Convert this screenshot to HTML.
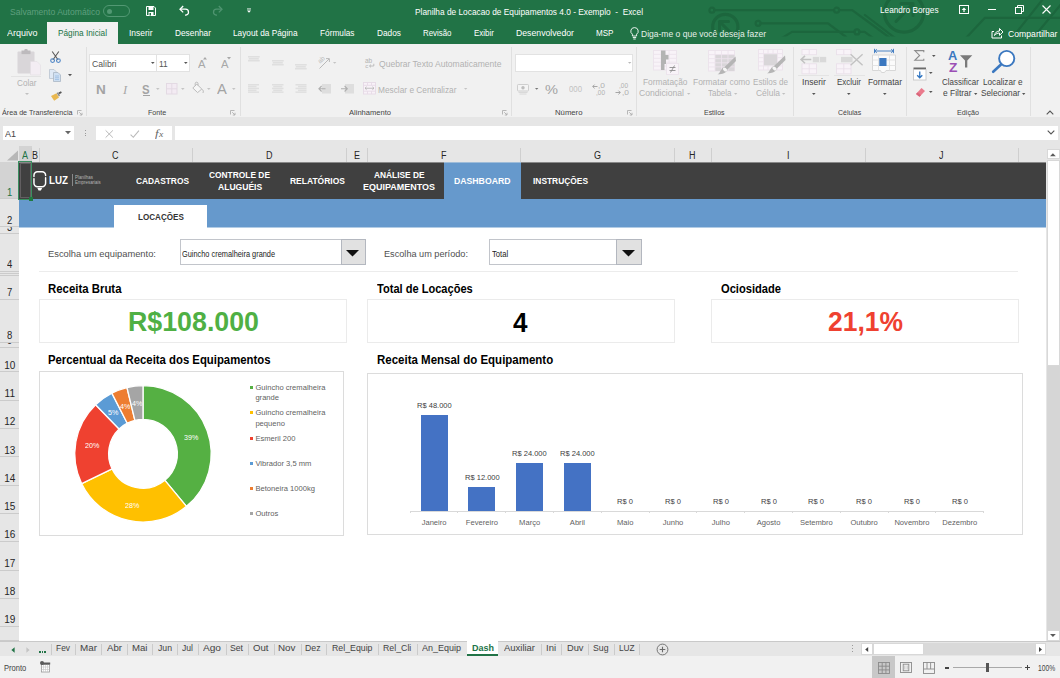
<!DOCTYPE html>
<html lang="pt-BR"><head><meta charset="utf-8"><title>Planilha de Locacao de Equipamentos 4.0 - Exemplo - Excel</title>
<style>
html,body{margin:0;padding:0;background:#fff;}
body{width:1060px;height:678px;overflow:hidden;position:relative;font-family:"Liberation Sans",sans-serif;}
#app{position:absolute;left:0;top:0;width:1060px;height:678px;overflow:hidden;background:#fff;}
.b{position:absolute;display:block;}
.t{position:absolute;display:block;white-space:pre;transform-origin:0 50%;font-family:"Liberation Sans",sans-serif;}
svg{overflow:visible}
</style></head><body><div id="app">
<!-- sheet -->
<div class="b" style="left:0px;top:117px;width:1060px;height:29px;background:#e6e6e6;"></div>
<div class="b" style="left:3px;top:125.5px;width:71px;height:14.5px;background:#fff;"></div>
<span class="t" style="left:5.20px;top:127.60px;font-size:9.5px;line-height:11px;height:11px;color:#444;transform:scaleX(0.9467);">A1</span>
<svg class="b" style="left:64.5px;top:131px;" width="6" height="3.2" viewBox="0 0 6 3.2"><path d="M0 0 H6 L3 3.2 Z" fill="#666"/></svg>
<div class="b" style="left:84.5px;top:130px;width:1px;height:1px;background:#9a9a9a;"></div>
<div class="b" style="left:84.5px;top:132.5px;width:1px;height:1px;background:#9a9a9a;"></div>
<div class="b" style="left:84.5px;top:135px;width:1px;height:1px;background:#9a9a9a;"></div>
<div class="b" style="left:95.5px;top:125.5px;width:76.5px;height:14.5px;background:#fff;"></div>
<svg class="b" style="left:104.5px;top:129.5px;" width="8.5" height="8" viewBox="0 0 8.5 8"><path d="M0.6 0.4 L7.9 7.6 M7.9 0.4 L0.6 7.6" stroke="#b9b9b9" stroke-width="1"/></svg>
<svg class="b" style="left:130px;top:129.5px;" width="9.5" height="8" viewBox="0 0 9.5 8"><path d="M0.6 4.6 L3.3 7.3 L8.9 0.6" fill="none" stroke="#b9b9b9" stroke-width="1.1"/></svg>
<span class="t" style="left:155.20px;top:127.00px;font-size:11px;line-height:12px;height:12px;color:#666;font-style:italic;transform:scaleX(1.1780);font-family:'Liberation Serif',serif;">f</span>
<span class="t" style="left:159.00px;top:129.30px;font-size:8.5px;line-height:10px;height:10px;color:#666;font-style:italic;transform:scaleX(1.1294);font-family:'Liberation Serif',serif;">x</span>
<div class="b" style="left:174.5px;top:125.5px;width:883.5px;height:14.5px;background:#fff;"></div>
<svg class="b" style="left:1046.5px;top:130px;" width="8" height="5" viewBox="0 0 8 5"><path d="M0.7 0.7 L4 4 L7.3 0.7" fill="none" stroke="#555" stroke-width="1.1"/></svg>
<div class="b" style="left:0px;top:146px;width:1060px;height:16px;background:#e6e6e6;"></div>
<svg class="b" style="left:6px;top:149.5px;" width="13" height="11" viewBox="0 0 13 11"><path d="M12 0.5 V10.5 H1 Z" fill="#b7b7b7"/></svg>
<div class="b" style="left:19px;top:146px;width:12.5px;height:16px;background:#d3d3d3;"></div>
<div class="b" style="left:19px;top:160.6px;width:12.5px;height:1.4px;background:#217346;"></div>
<div class="b" style="left:31.0px;top:148px;width:1px;height:14px;background:#cfcfcf;"></div>
<span class="t" style="left:22.25px;top:150.20px;font-size:10px;line-height:11px;height:11px;color:#217346;transform:scaleX(0.9000);">A</span>
<div class="b" style="left:38.5px;top:148px;width:1px;height:14px;background:#cfcfcf;"></div>
<span class="t" style="left:32.25px;top:150.20px;font-size:10px;line-height:11px;height:11px;color:#262626;transform:scaleX(0.9000);">B</span>
<div class="b" style="left:191.5px;top:148px;width:1px;height:14px;background:#cfcfcf;"></div>
<span class="t" style="left:112.25px;top:150.20px;font-size:10px;line-height:11px;height:11px;color:#262626;transform:scaleX(0.9000);">C</span>
<div class="b" style="left:345.5px;top:148px;width:1px;height:14px;background:#cfcfcf;"></div>
<span class="t" style="left:265.75px;top:150.20px;font-size:10px;line-height:11px;height:11px;color:#262626;transform:scaleX(0.9000);">D</span>
<div class="b" style="left:366.5px;top:148px;width:1px;height:14px;background:#cfcfcf;"></div>
<span class="t" style="left:353.50px;top:150.20px;font-size:10px;line-height:11px;height:11px;color:#262626;transform:scaleX(0.9000);">E</span>
<div class="b" style="left:519.5px;top:148px;width:1px;height:14px;background:#cfcfcf;"></div>
<span class="t" style="left:440.75px;top:150.20px;font-size:10px;line-height:11px;height:11px;color:#262626;transform:scaleX(0.9000);">F</span>
<div class="b" style="left:673.5px;top:148px;width:1px;height:14px;background:#cfcfcf;"></div>
<span class="t" style="left:593.50px;top:150.20px;font-size:10px;line-height:11px;height:11px;color:#262626;transform:scaleX(0.9000);">G</span>
<div class="b" style="left:710.5px;top:148px;width:1px;height:14px;background:#cfcfcf;"></div>
<span class="t" style="left:689.25px;top:150.20px;font-size:10px;line-height:11px;height:11px;color:#262626;transform:scaleX(0.9000);">H</span>
<div class="b" style="left:864.5px;top:148px;width:1px;height:14px;background:#cfcfcf;"></div>
<span class="t" style="left:786.75px;top:150.20px;font-size:10px;line-height:11px;height:11px;color:#262626;transform:scaleX(0.9000);">I</span>
<div class="b" style="left:1017.5px;top:148px;width:1px;height:14px;background:#cfcfcf;"></div>
<span class="t" style="left:939.25px;top:150.20px;font-size:10px;line-height:11px;height:11px;color:#262626;transform:scaleX(0.9000);">J</span>
<div class="b" style="left:0px;top:162px;width:19px;height:479px;background:#e6e6e6;"></div>
<div class="b" style="left:0px;top:162px;width:19px;height:37px;background:#d3d3d3;"></div>
<div class="b" style="left:17.6px;top:162px;width:1.4px;height:37px;background:#217346;"></div>
<div class="b" style="left:0px;top:198.4px;width:19px;height:1px;background:#cbcbcb;"></div>
<div class="b" style="left:0;top:162.4px;width:19px;height:36.4px;overflow:hidden"><div class="b" style="left:0;top:-0.4px;width:19px;height:37.0px"><span class="t" style="left:7.16px;top:24.60px;font-size:10px;line-height:11px;height:11px;color:#217346;transform:scaleX(0.9500);">1</span></div></div>
<div class="b" style="left:0px;top:226.4px;width:19px;height:1px;background:#cbcbcb;"></div>
<div class="b" style="left:0;top:199.4px;width:19px;height:27.4px;overflow:hidden"><div class="b" style="left:0;top:-0.4px;width:19px;height:28.0px"><span class="t" style="left:7.16px;top:15.60px;font-size:10px;line-height:11px;height:11px;color:#262626;transform:scaleX(0.9500);">2</span></div></div>
<div class="b" style="left:0px;top:233.4px;width:19px;height:1px;background:#cbcbcb;"></div>
<div class="b" style="left:0;top:227.4px;width:19px;height:6.4px;overflow:hidden"><div class="b" style="left:0;top:-0.4px;width:19px;height:7.0px"><span class="t" style="left:7.16px;top:-5.40px;font-size:10px;line-height:11px;height:11px;color:#262626;transform:scaleX(0.9500);">3</span></div></div>
<div class="b" style="left:0px;top:271.4px;width:19px;height:1px;background:#cbcbcb;"></div>
<div class="b" style="left:0;top:234.4px;width:19px;height:37.4px;overflow:hidden"><div class="b" style="left:0;top:-0.4px;width:19px;height:38.0px"><span class="t" style="left:7.16px;top:24.60px;font-size:10px;line-height:11px;height:11px;color:#262626;transform:scaleX(0.9500);">4</span></div></div>
<div class="b" style="left:0px;top:273.0px;width:19px;height:1px;background:#cbcbcb;"></div>
<div class="b" style="left:0px;top:274.7px;width:19px;height:1px;background:#cbcbcb;"></div>
<div class="b" style="left:0px;top:299.1px;width:19px;height:1px;background:#cbcbcb;"></div>
<div class="b" style="left:0;top:275.7px;width:19px;height:23.8px;overflow:hidden"><div class="b" style="left:0;top:-0.4px;width:19px;height:24.4px"><span class="t" style="left:7.16px;top:12.00px;font-size:10px;line-height:11px;height:11px;color:#262626;transform:scaleX(0.9500);">7</span></div></div>
<div class="b" style="left:0px;top:341.6px;width:19px;height:1px;background:#cbcbcb;"></div>
<div class="b" style="left:0;top:300.1px;width:19px;height:41.9px;overflow:hidden"><div class="b" style="left:0;top:-0.4px;width:19px;height:42.5px"><span class="t" style="left:7.16px;top:30.10px;font-size:10px;line-height:11px;height:11px;color:#262626;transform:scaleX(0.9500);">8</span></div></div>
<div class="b" style="left:0px;top:346.8px;width:19px;height:1px;background:#cbcbcb;"></div>
<div class="b" style="left:0;top:342.6px;width:19px;height:4.6px;overflow:hidden"><div class="b" style="left:0;top:-0.4px;width:19px;height:5.2px"><span class="t" style="left:7.16px;top:-7.20px;font-size:10px;line-height:11px;height:11px;color:#262626;transform:scaleX(0.9500);">9</span></div></div>
<div class="b" style="left:0px;top:371.4px;width:19px;height:1px;background:#cbcbcb;"></div>
<div class="b" style="left:0;top:347.8px;width:19px;height:24.0px;overflow:hidden"><div class="b" style="left:0;top:-0.4px;width:19px;height:24.6px"><span class="t" style="left:4.24px;top:12.20px;font-size:10px;line-height:11px;height:11px;color:#262626;transform:scaleX(1.0000);">10</span></div></div>
<div class="b" style="left:0px;top:399.7px;width:19px;height:1px;background:#cbcbcb;"></div>
<div class="b" style="left:0;top:372.4px;width:19px;height:27.7px;overflow:hidden"><div class="b" style="left:0;top:-0.4px;width:19px;height:28.3px"><span class="t" style="left:4.61px;top:15.90px;font-size:10px;line-height:11px;height:11px;color:#262626;transform:scaleX(1.0000);">11</span></div></div>
<div class="b" style="left:0px;top:428.0px;width:19px;height:1px;background:#cbcbcb;"></div>
<div class="b" style="left:0;top:400.7px;width:19px;height:27.7px;overflow:hidden"><div class="b" style="left:0;top:-0.4px;width:19px;height:28.3px"><span class="t" style="left:4.24px;top:15.90px;font-size:10px;line-height:11px;height:11px;color:#262626;transform:scaleX(1.0000);">12</span></div></div>
<div class="b" style="left:0px;top:456.3px;width:19px;height:1px;background:#cbcbcb;"></div>
<div class="b" style="left:0;top:429.0px;width:19px;height:27.7px;overflow:hidden"><div class="b" style="left:0;top:-0.4px;width:19px;height:28.3px"><span class="t" style="left:4.24px;top:15.90px;font-size:10px;line-height:11px;height:11px;color:#262626;transform:scaleX(1.0000);">13</span></div></div>
<div class="b" style="left:0px;top:484.6px;width:19px;height:1px;background:#cbcbcb;"></div>
<div class="b" style="left:0;top:457.3px;width:19px;height:27.7px;overflow:hidden"><div class="b" style="left:0;top:-0.4px;width:19px;height:28.3px"><span class="t" style="left:4.24px;top:15.90px;font-size:10px;line-height:11px;height:11px;color:#262626;transform:scaleX(1.0000);">14</span></div></div>
<div class="b" style="left:0px;top:512.9px;width:19px;height:1px;background:#cbcbcb;"></div>
<div class="b" style="left:0;top:485.6px;width:19px;height:27.7px;overflow:hidden"><div class="b" style="left:0;top:-0.4px;width:19px;height:28.3px"><span class="t" style="left:4.24px;top:15.90px;font-size:10px;line-height:11px;height:11px;color:#262626;transform:scaleX(1.0000);">15</span></div></div>
<div class="b" style="left:0px;top:541.2px;width:19px;height:1px;background:#cbcbcb;"></div>
<div class="b" style="left:0;top:513.9px;width:19px;height:27.7px;overflow:hidden"><div class="b" style="left:0;top:-0.4px;width:19px;height:28.3px"><span class="t" style="left:4.24px;top:15.90px;font-size:10px;line-height:11px;height:11px;color:#262626;transform:scaleX(1.0000);">16</span></div></div>
<div class="b" style="left:0px;top:569.5px;width:19px;height:1px;background:#cbcbcb;"></div>
<div class="b" style="left:0;top:542.2px;width:19px;height:27.7px;overflow:hidden"><div class="b" style="left:0;top:-0.4px;width:19px;height:28.3px"><span class="t" style="left:4.24px;top:15.90px;font-size:10px;line-height:11px;height:11px;color:#262626;transform:scaleX(1.0000);">17</span></div></div>
<div class="b" style="left:0px;top:597.8px;width:19px;height:1px;background:#cbcbcb;"></div>
<div class="b" style="left:0;top:570.5px;width:19px;height:27.7px;overflow:hidden"><div class="b" style="left:0;top:-0.4px;width:19px;height:28.3px"><span class="t" style="left:4.24px;top:15.90px;font-size:10px;line-height:11px;height:11px;color:#262626;transform:scaleX(1.0000);">18</span></div></div>
<div class="b" style="left:0px;top:626.1px;width:19px;height:1px;background:#cbcbcb;"></div>
<div class="b" style="left:0;top:598.8px;width:19px;height:27.7px;overflow:hidden"><div class="b" style="left:0;top:-0.4px;width:19px;height:28.3px"><span class="t" style="left:4.24px;top:15.90px;font-size:10px;line-height:11px;height:11px;color:#262626;transform:scaleX(1.0000);">19</span></div></div>
<div class="b" style="left:0px;top:640.4px;width:19px;height:1px;background:#cbcbcb;"></div>
<div class="b" style="left:19px;top:162px;width:1027px;height:479px;background:#fff;"></div>
<div class="b" style="left:19px;top:162px;width:1027px;height:37px;background:#404040;"></div>
<div class="b" style="left:444px;top:162px;width:77.4px;height:37px;background:#6699cc;"></div>
<div class="b" style="left:19px;top:162px;width:1027px;height:1px;background:rgba(235,235,235,0.42);"></div>
<div class="b" style="left:19px;top:227px;width:1027px;height:1px;background:rgba(102,153,204,0.5);"></div>
<div class="b" style="left:19px;top:199px;width:1027px;height:28.3px;background:#6699cc;"></div>
<div class="b" style="left:18.4px;top:161.4px;width:14px;height:38.4px;border:1.5px solid #3a8f60;box-sizing:border-box;"></div>
<div class="b" style="left:20px;top:163px;width:11px;height:35.4px;border:0.6px solid rgba(220,205,215,0.22);box-sizing:border-box;"></div>
<div class="b" style="left:29.4px;top:197.2px;width:3.6px;height:3.6px;background:#1e7a40;"></div>
<svg class="b" style="left:33px;top:171px;" width="14" height="20" viewBox="0 0 14 20"><path d="M0.95 5.4 V4.3 A3.5 3.5 0 0 1 4.45 0.8 H9.1 A3.5 3.5 0 0 1 12.6 4.3 V4.6" fill="none" stroke="#fff" stroke-width="1.45" stroke-linecap="round"/><path d="M0.95 7.6 V12.3 A3.5 3.5 0 0 0 4.45 15.8 H9.1 A3.5 3.5 0 0 0 12.6 12.3 V6.8" fill="none" stroke="#fff" stroke-width="1.45" stroke-linecap="round"/><path d="M4.3 17.1 H9.2 L7.9 19.6 H5.6 Z" fill="#fff"/></svg>
<span class="t" style="left:49.30px;top:174.70px;font-size:10.4px;line-height:11px;height:11px;color:#fff;font-weight:bold;transform:scaleX(0.9398);">LUZ</span>
<div class="b" style="left:71.6px;top:174px;width:1px;height:11.5px;background:#8a8a8a;"></div>
<span class="t" style="left:75.30px;top:175.20px;font-size:4.6px;line-height:5px;height:5px;color:#b5b5b5;transform:scaleX(0.9589);">Planilhas</span>
<span class="t" style="left:75.30px;top:180.00px;font-size:4.6px;line-height:5px;height:5px;color:#b5b5b5;transform:scaleX(0.9575);">Empresariais</span>
<span class="t" style="left:136.00px;top:175.30px;font-size:9.8px;line-height:11px;height:11px;color:#fff;font-weight:bold;transform:scaleX(0.8539);">CADASTROS</span>
<span class="t" style="left:209.20px;top:169.00px;font-size:9.8px;line-height:11px;height:11px;color:#fff;font-weight:bold;transform:scaleX(0.8553);">CONTROLE DE</span>
<span class="t" style="left:217.60px;top:181.40px;font-size:9.8px;line-height:11px;height:11px;color:#fff;font-weight:bold;transform:scaleX(0.8729);">ALUGUÉIS</span>
<span class="t" style="left:289.60px;top:175.30px;font-size:9.8px;line-height:11px;height:11px;color:#fff;font-weight:bold;transform:scaleX(0.8643);">RELATÓRIOS</span>
<span class="t" style="left:373.50px;top:169.00px;font-size:9.8px;line-height:11px;height:11px;color:#fff;font-weight:bold;transform:scaleX(0.8509);">ANÁLISE DE</span>
<span class="t" style="left:362.80px;top:181.40px;font-size:9.8px;line-height:11px;height:11px;color:#fff;font-weight:bold;transform:scaleX(0.9161);">EQUIPAMENTOS</span>
<span class="t" style="left:454.00px;top:175.30px;font-size:9.8px;line-height:11px;height:11px;color:#fff;font-weight:bold;transform:scaleX(0.8870);">DASHBOARD</span>
<span class="t" style="left:532.80px;top:175.30px;font-size:9.8px;line-height:11px;height:11px;color:#fff;font-weight:bold;transform:scaleX(0.8560);">INSTRUÇÕES</span>
<div class="b" style="left:114px;top:205px;width:93.3px;height:23px;background:#fff;"></div>
<span class="t" style="left:137.80px;top:210.90px;font-size:9.8px;line-height:11px;height:11px;color:#333;font-weight:bold;transform:scaleX(0.8247);">LOCAÇÕES</span>
<span class="t" style="left:48.00px;top:247.70px;font-size:9.6px;line-height:11px;height:11px;color:#505050;transform:scaleX(0.9730);">Escolha um equipamento:</span>
<div class="b" style="left:180px;top:239px;width:185.5px;height:26.4px;background:#fff;border:1px solid #c2c5cb;box-sizing:border-box;"></div>
<div class="b" style="left:340.5px;top:239px;width:25px;height:26.4px;background:#e1e1e1;border:1px solid #b3b7bf;box-sizing:border-box;"></div>
<svg class="b" style="left:346.3px;top:250px;" width="13" height="6.6" viewBox="0 0 13 6.6"><path d="M0 0 H13 L6.5 6.6 Z" fill="#111"/></svg>
<span class="t" style="left:182.30px;top:249.50px;font-size:8.2px;line-height:9px;height:9px;color:#222;transform:scaleX(0.9008);">Guincho cremalheira grande</span>
<span class="t" style="left:384.00px;top:247.70px;font-size:9.6px;line-height:11px;height:11px;color:#505050;transform:scaleX(0.9540);">Escolha um período:</span>
<div class="b" style="left:489px;top:239px;width:153px;height:26.4px;background:#fff;border:1px solid #c2c5cb;box-sizing:border-box;"></div>
<div class="b" style="left:615.5px;top:239px;width:26.5px;height:26.4px;background:#e1e1e1;border:1px solid #b3b7bf;box-sizing:border-box;"></div>
<svg class="b" style="left:622px;top:250px;" width="13" height="6.6" viewBox="0 0 13 6.6"><path d="M0 0 H13 L6.5 6.6 Z" fill="#111"/></svg>
<span class="t" style="left:491.80px;top:249.50px;font-size:8.2px;line-height:9px;height:9px;color:#222;transform:scaleX(0.9353);">Total</span>
<div class="b" style="left:39px;top:270.8px;width:979px;height:1px;background:#ececec;"></div>
<span class="t" style="left:48.00px;top:281.60px;font-size:12px;line-height:14px;height:14px;color:#000;font-weight:bold;transform:scaleX(0.9501);">Receita Bruta</span>
<span class="t" style="left:376.80px;top:281.60px;font-size:12px;line-height:14px;height:14px;color:#000;font-weight:bold;transform:scaleX(0.9219);">Total de Locações</span>
<span class="t" style="left:721.00px;top:281.60px;font-size:12px;line-height:14px;height:14px;color:#000;font-weight:bold;transform:scaleX(0.9275);">Ociosidade</span>
<div class="b" style="left:39px;top:299px;width:307.5px;height:44px;border:1px solid #ebebeb;box-sizing:border-box;"></div>
<div class="b" style="left:367px;top:299px;width:307.5px;height:44px;border:1px solid #ebebeb;box-sizing:border-box;"></div>
<div class="b" style="left:711px;top:299px;width:307.5px;height:44px;border:1px solid #ebebeb;box-sizing:border-box;"></div>
<span class="t" style="left:127.50px;top:307.40px;font-size:26.8px;line-height:30px;height:30px;color:#4fb044;font-weight:bold;transform:scaleX(0.9990);">R$108.000</span>
<span class="t" style="left:512.90px;top:306.50px;font-size:27.4px;line-height:31px;height:31px;color:#000;font-weight:bold;transform:scaleX(0.9515);">4</span>
<span class="t" style="left:828.00px;top:306.30px;font-size:27.3px;line-height:31px;height:31px;color:#ef4130;font-weight:bold;transform:scaleX(0.9689);">21,1%</span>
<span class="t" style="left:48.00px;top:353.20px;font-size:12px;line-height:14px;height:14px;color:#000;font-weight:bold;transform:scaleX(0.9452);">Percentual da Receita dos Equipamentos</span>
<span class="t" style="left:376.80px;top:353.20px;font-size:12px;line-height:14px;height:14px;color:#000;font-weight:bold;transform:scaleX(0.9574);">Receita Mensal do Equipamento</span>
<div class="b" style="left:39px;top:371px;width:304.5px;height:164.5px;background:#fff;border:1px solid #dcdcdc;box-sizing:border-box;"></div>
<svg class="b" style="left:0px;top:0px;pointer-events:none;" width="1060" height="678" viewBox="0 0 1060 678"><path d="M143.00 385.60 A68.2 68.2 0 0 1 186.47 506.35 L164.93 480.31 A34.4 34.4 0 0 0 143.00 419.40 Z" fill="#55b043" stroke="#fff" stroke-width="1.3" stroke-linejoin="round"/><path d="M186.47 506.35 A68.2 68.2 0 0 1 81.70 483.70 L112.08 468.88 A34.4 34.4 0 0 0 164.93 480.31 Z" fill="#ffc000" stroke="#fff" stroke-width="1.3" stroke-linejoin="round"/><path d="M81.70 483.70 A68.2 68.2 0 0 1 95.62 404.74 L119.10 429.05 A34.4 34.4 0 0 0 112.08 468.88 Z" fill="#ef4130" stroke="#fff" stroke-width="1.3" stroke-linejoin="round"/><path d="M95.62 404.74 A68.2 68.2 0 0 1 111.83 393.14 L127.28 423.20 A34.4 34.4 0 0 0 119.10 429.05 Z" fill="#5b9bd5" stroke="#fff" stroke-width="1.3" stroke-linejoin="round"/><path d="M111.83 393.14 A68.2 68.2 0 0 1 126.96 387.51 L134.91 420.36 A34.4 34.4 0 0 0 127.28 423.20 Z" fill="#ed7d31" stroke="#fff" stroke-width="1.3" stroke-linejoin="round"/><path d="M126.96 387.51 A68.2 68.2 0 0 1 143.00 385.60 L143.00 419.40 A34.4 34.4 0 0 0 134.91 420.36 Z" fill="#a5a5a5" stroke="#fff" stroke-width="1.3" stroke-linejoin="round"/></svg>
<span class="t" style="left:184.02px;top:432.90px;font-size:7.4px;line-height:9px;height:9px;color:#fff;transform:scaleX(0.9700);">39%</span>
<span class="t" style="left:124.62px;top:500.80px;font-size:7.4px;line-height:9px;height:9px;color:#fff;transform:scaleX(0.9700);">28%</span>
<span class="t" style="left:84.52px;top:441.00px;font-size:7.4px;line-height:9px;height:9px;color:#fff;transform:scaleX(0.9700);">20%</span>
<span class="t" style="left:107.61px;top:407.90px;font-size:7.4px;line-height:9px;height:9px;color:#fff;transform:scaleX(0.9700);">5%</span>
<span class="t" style="left:119.71px;top:401.80px;font-size:7.4px;line-height:9px;height:9px;color:#fff;transform:scaleX(0.9700);">4%</span>
<span class="t" style="left:131.51px;top:398.90px;font-size:7.4px;line-height:9px;height:9px;color:#fff;transform:scaleX(0.9700);">4%</span>
<div class="b" style="left:249.6px;top:385.6px;width:3px;height:3px;background:#55b043;"></div>
<span class="t" style="left:255.40px;top:382.70px;font-size:7.6px;line-height:9px;height:9px;color:#5f5f5f;transform:scaleX(1.0000);">Guincho cremalheira</span>
<span class="t" style="left:255.40px;top:393.10px;font-size:7.6px;line-height:9px;height:9px;color:#5f5f5f;transform:scaleX(1.0000);">grande</span>
<div class="b" style="left:249.6px;top:411.20000000000005px;width:3px;height:3px;background:#ffc000;"></div>
<span class="t" style="left:255.40px;top:408.30px;font-size:7.6px;line-height:9px;height:9px;color:#5f5f5f;transform:scaleX(1.0000);">Guincho cremalheira</span>
<span class="t" style="left:255.40px;top:418.70px;font-size:7.6px;line-height:9px;height:9px;color:#5f5f5f;transform:scaleX(1.0000);">pequeno</span>
<div class="b" style="left:249.6px;top:436.5px;width:3px;height:3px;background:#ef4130;"></div>
<span class="t" style="left:255.40px;top:433.60px;font-size:7.6px;line-height:9px;height:9px;color:#5f5f5f;transform:scaleX(1.0000);">Esmeril 200</span>
<div class="b" style="left:249.6px;top:461.6px;width:3px;height:3px;background:#5b9bd5;"></div>
<span class="t" style="left:255.40px;top:458.70px;font-size:7.6px;line-height:9px;height:9px;color:#5f5f5f;transform:scaleX(1.0000);">Vibrador 3,5 mm</span>
<div class="b" style="left:249.6px;top:486.90000000000003px;width:3px;height:3px;background:#ed7d31;"></div>
<span class="t" style="left:255.40px;top:484.00px;font-size:7.6px;line-height:9px;height:9px;color:#5f5f5f;transform:scaleX(1.0000);">Betoneira 1000kg</span>
<div class="b" style="left:249.6px;top:511.9px;width:3px;height:3px;background:#a5a5a5;"></div>
<span class="t" style="left:255.40px;top:509.00px;font-size:7.6px;line-height:9px;height:9px;color:#5f5f5f;transform:scaleX(1.0000);">Outros</span>
<div class="b" style="left:366.5px;top:372.5px;width:656px;height:162px;background:#fff;border:1px solid #dcdcdc;box-sizing:border-box;"></div>
<div class="b" style="left:410.2px;top:510.5px;width:573.4000000000001px;height:1px;background:#d9d9d9;"></div>
<div class="b" style="left:409.7px;top:510.5px;width:1px;height:2.6px;background:#d9d9d9;"></div>
<div class="b" style="left:457.48333333333335px;top:510.5px;width:1px;height:2.6px;background:#d9d9d9;"></div>
<div class="b" style="left:505.26666666666665px;top:510.5px;width:1px;height:2.6px;background:#d9d9d9;"></div>
<div class="b" style="left:553.05px;top:510.5px;width:1px;height:2.6px;background:#d9d9d9;"></div>
<div class="b" style="left:600.8333333333334px;top:510.5px;width:1px;height:2.6px;background:#d9d9d9;"></div>
<div class="b" style="left:648.6166666666667px;top:510.5px;width:1px;height:2.6px;background:#d9d9d9;"></div>
<div class="b" style="left:696.4000000000001px;top:510.5px;width:1px;height:2.6px;background:#d9d9d9;"></div>
<div class="b" style="left:744.1833333333334px;top:510.5px;width:1px;height:2.6px;background:#d9d9d9;"></div>
<div class="b" style="left:791.9666666666667px;top:510.5px;width:1px;height:2.6px;background:#d9d9d9;"></div>
<div class="b" style="left:839.75px;top:510.5px;width:1px;height:2.6px;background:#d9d9d9;"></div>
<div class="b" style="left:887.5333333333333px;top:510.5px;width:1px;height:2.6px;background:#d9d9d9;"></div>
<div class="b" style="left:935.3166666666666px;top:510.5px;width:1px;height:2.6px;background:#d9d9d9;"></div>
<div class="b" style="left:983.1000000000001px;top:510.5px;width:1px;height:2.6px;background:#d9d9d9;"></div>
<div class="b" style="left:420.6px;top:414.8px;width:27px;height:96.0px;background:#4472c4;"></div>
<span class="t" style="left:416.73px;top:400.60px;font-size:7.6px;line-height:9px;height:9px;color:#404040;transform:scaleX(0.9900);">R$ 48.000</span>
<span class="t" style="left:421.63px;top:517.60px;font-size:7.6px;line-height:9px;height:9px;color:#5f5f5f;transform:scaleX(1.0000);">Janeiro</span>
<div class="b" style="left:468.4px;top:487.1px;width:27px;height:23.7px;background:#4472c4;"></div>
<span class="t" style="left:464.51px;top:472.90px;font-size:7.6px;line-height:9px;height:9px;color:#404040;transform:scaleX(0.9900);">R$ 12.000</span>
<span class="t" style="left:465.83px;top:517.60px;font-size:7.6px;line-height:9px;height:9px;color:#5f5f5f;transform:scaleX(1.0000);">Fevereiro</span>
<div class="b" style="left:516.2px;top:463.3px;width:27px;height:47.5px;background:#4472c4;"></div>
<span class="t" style="left:512.30px;top:449.10px;font-size:7.6px;line-height:9px;height:9px;color:#404040;transform:scaleX(0.9900);">R$ 24.000</span>
<span class="t" style="left:519.10px;top:517.60px;font-size:7.6px;line-height:9px;height:9px;color:#5f5f5f;transform:scaleX(1.0000);">Março</span>
<div class="b" style="left:563.9px;top:463.3px;width:27px;height:47.5px;background:#4472c4;"></div>
<span class="t" style="left:560.08px;top:449.10px;font-size:7.6px;line-height:9px;height:9px;color:#404040;transform:scaleX(0.9900);">R$ 24.000</span>
<span class="t" style="left:569.84px;top:517.60px;font-size:7.6px;line-height:9px;height:9px;color:#5f5f5f;transform:scaleX(1.0000);">Abril</span>
<span class="t" style="left:617.28px;top:496.60px;font-size:7.6px;line-height:9px;height:9px;color:#404040;transform:scaleX(0.9900);">R$ 0</span>
<span class="t" style="left:616.99px;top:517.60px;font-size:7.6px;line-height:9px;height:9px;color:#5f5f5f;transform:scaleX(1.0000);">Maio</span>
<span class="t" style="left:665.06px;top:496.60px;font-size:7.6px;line-height:9px;height:9px;color:#404040;transform:scaleX(0.9900);">R$ 0</span>
<span class="t" style="left:662.65px;top:517.60px;font-size:7.6px;line-height:9px;height:9px;color:#5f5f5f;transform:scaleX(1.0000);">Junho</span>
<span class="t" style="left:712.85px;top:496.60px;font-size:7.6px;line-height:9px;height:9px;color:#404040;transform:scaleX(0.9900);">R$ 0</span>
<span class="t" style="left:711.71px;top:517.60px;font-size:7.6px;line-height:9px;height:9px;color:#5f5f5f;transform:scaleX(1.0000);">Julho</span>
<span class="t" style="left:760.63px;top:496.60px;font-size:7.6px;line-height:9px;height:9px;color:#404040;transform:scaleX(0.9900);">R$ 0</span>
<span class="t" style="left:756.74px;top:517.60px;font-size:7.6px;line-height:9px;height:9px;color:#5f5f5f;transform:scaleX(1.0000);">Agosto</span>
<span class="t" style="left:808.41px;top:496.60px;font-size:7.6px;line-height:9px;height:9px;color:#404040;transform:scaleX(0.9900);">R$ 0</span>
<span class="t" style="left:799.88px;top:517.60px;font-size:7.6px;line-height:9px;height:9px;color:#5f5f5f;transform:scaleX(1.0000);">Setembro</span>
<span class="t" style="left:856.20px;top:496.60px;font-size:7.6px;line-height:9px;height:9px;color:#404040;transform:scaleX(0.9900);">R$ 0</span>
<span class="t" style="left:850.41px;top:517.60px;font-size:7.6px;line-height:9px;height:9px;color:#5f5f5f;transform:scaleX(1.0000);">Outubro</span>
<span class="t" style="left:903.98px;top:496.60px;font-size:7.6px;line-height:9px;height:9px;color:#404040;transform:scaleX(0.9900);">R$ 0</span>
<span class="t" style="left:894.40px;top:517.60px;font-size:7.6px;line-height:9px;height:9px;color:#5f5f5f;transform:scaleX(1.0000);">Novembro</span>
<span class="t" style="left:951.76px;top:496.60px;font-size:7.6px;line-height:9px;height:9px;color:#404040;transform:scaleX(0.9900);">R$ 0</span>
<span class="t" style="left:942.18px;top:517.60px;font-size:7.6px;line-height:9px;height:9px;color:#5f5f5f;transform:scaleX(1.0000);">Dezembro</span>
<!-- title/tabs -->
<div class="b" style="left:0px;top:0px;width:1060px;height:44px;background:#217346;"></div>
<svg class="b" style="left:0px;top:0px;" width="1060" height="44" viewBox="0 0 1060 44">
<defs><clipPath id="pc"><rect x="690" y="0" width="370" height="36.6"/></clipPath></defs>
<g clip-path="url(#pc)">
<g fill="none" stroke="#1c663d" stroke-width="2.2" stroke-linecap="round" stroke-linejoin="round">
<path d="M714.4 10.2 H834.1 M839.1 10.2 H852.2 L880 30.5 L890 38"/>
<circle cx="711.9" cy="10.2" r="2.5"/><circle cx="836.6" cy="10.2" r="2.5"/>
<path d="M760.6 23.3 H828 L846 37"/><circle cx="758.1" cy="23.3" r="2.5"/>
<path d="M782 38 L792 31.9 H854.5 M859.5 31.9 H864.7 L873 38"/><circle cx="857" cy="31.9" r="2.5"/>
<path d="M865 15 L895 38"/>
<path d="M1060 17.9 H984.7 L966 38"/>
<path d="M1043 -1 L1012 38"/>
<path d="M1062 3 L1033 38"/>
</g>
<g fill="none" stroke="#1c663d" stroke-width="3.2">
<circle cx="725.3" cy="26.9" r="12.6"/>
<circle cx="904" cy="12.5" r="19.6"/>
</g>
<g fill="none" stroke="#1c663d" stroke-width="3" stroke-linecap="round" stroke-linejoin="round">
<path d="M733 35 L719.5 21.5 M719.5 30.5 V21.5 H728.5"/>
<path d="M896 21.5 L913 3.6 M901 3.6 H913 V15.6"/>
</g>
</g>
</svg>
<span class="t" style="left:10.00px;top:7.00px;font-size:9px;line-height:10px;height:10px;color:#5f9f7e;transform:scaleX(0.9518);">Salvamento Automático</span>
<div class="b" style="left:103px;top:5px;width:27px;height:12px;border:1px solid #529873;box-sizing:border-box;border-radius:6px;"></div>
<div class="b" style="left:107px;top:8.5px;width:5px;height:5px;background:#529873;border-radius:3px;"></div>
<svg class="b" style="left:146px;top:6px;" width="10" height="10" viewBox="0 0 10 10"><path d="M0.5 0.5 H8 L9.5 2 V9.5 H0.5 Z" fill="none" stroke="#fff" stroke-width="1"/><rect x="2.5" y="0.5" width="5" height="3.5" fill="#fff"/><rect x="2.5" y="6" width="5" height="3.5" fill="#fff"/><rect x="3.5" y="7" width="1.5" height="2.5" fill="#217346"/></svg>
<svg class="b" style="left:179px;top:5px;" width="11" height="11" viewBox="0 0 11 11"><path d="M1.2 4.2 H6.5 A3 3 0 0 1 6.5 10.2 H6" fill="none" stroke="#fff" stroke-width="1.3"/><path d="M4.2 1 L1 4.2 L4.2 7.4" fill="none" stroke="#fff" stroke-width="1.3"/></svg>
<svg class="b" style="left:212px;top:5px;" width="11" height="11" viewBox="0 0 11 11"><path d="M9.8 4.2 H4.5 A3 3 0 0 0 4.5 10.2 H5" fill="none" stroke="#4f9470" stroke-width="1.3"/><path d="M6.8 1 L10 4.2 L6.8 7.4" fill="none" stroke="#4f9470" stroke-width="1.3"/></svg>
<svg class="b" style="left:246px;top:7.5px;" width="6" height="6" viewBox="0 0 6 6"><rect x="1" y="0.5" width="4" height="0.9" fill="#fff"/><path d="M1 2.6 H5 L3 4.8 Z" fill="#fff"/></svg>
<span class="t" style="left:415.00px;top:7.00px;font-size:9px;line-height:10px;height:10px;color:#fff;transform:scaleX(0.9244);">Planilha de Locacao de Equipamentos 4.0 - Exemplo  -  Excel</span>
<span class="t" style="left:880.00px;top:5.40px;font-size:9px;line-height:10px;height:10px;color:#fff;transform:scaleX(0.9134);">Leandro Borges</span>
<svg class="b" style="left:959px;top:5px;" width="10" height="9" viewBox="0 0 10 9"><rect x="0.5" y="0.5" width="9" height="8" fill="none" stroke="#fff" stroke-width="1"/><path d="M5 2.5 L7.3 5 H2.7 Z M4.4 5 H5.6 V7 H4.4 Z" fill="#fff"/></svg>
<div class="b" style="left:988px;top:9px;width:8px;height:1px;background:#fff;"></div>
<svg class="b" style="left:1015px;top:5px;" width="9" height="9" viewBox="0 0 9 9"><rect x="0.5" y="2.5" width="6" height="6" fill="none" stroke="#fff"/><path d="M2.5 2.5 V0.5 H8.5 V6.5 H6.5" fill="none" stroke="#fff"/></svg>
<svg class="b" style="left:1042px;top:5px;" width="9" height="9" viewBox="0 0 9 9"><path d="M0.5 0.5 L8.5 8.5 M8.5 0.5 L0.5 8.5" stroke="#fff" stroke-width="1.1"/></svg>
<div class="b" style="left:47px;top:22px;width:71px;height:22px;background:#f1f1f1;"></div>
<span class="t" style="left:7.00px;top:28.30px;font-size:9px;line-height:10px;height:10px;color:#fff;transform:scaleX(0.9995);">Arquivo</span>
<span class="t" style="left:58.00px;top:28.30px;font-size:9px;line-height:10px;height:10px;color:#217346;transform:scaleX(0.9153);">Página Inicial</span>
<span class="t" style="left:129.00px;top:28.30px;font-size:9px;line-height:10px;height:10px;color:#fff;transform:scaleX(0.9398);">Inserir</span>
<span class="t" style="left:175.00px;top:28.30px;font-size:9px;line-height:10px;height:10px;color:#fff;transform:scaleX(0.9225);">Desenhar</span>
<span class="t" style="left:233.00px;top:28.30px;font-size:9px;line-height:10px;height:10px;color:#fff;transform:scaleX(0.9207);">Layout da Página</span>
<span class="t" style="left:320.00px;top:28.30px;font-size:9px;line-height:10px;height:10px;color:#fff;transform:scaleX(0.9198);">Fórmulas</span>
<span class="t" style="left:377.00px;top:28.30px;font-size:9px;line-height:10px;height:10px;color:#fff;transform:scaleX(0.9225);">Dados</span>
<span class="t" style="left:423.00px;top:28.30px;font-size:9px;line-height:10px;height:10px;color:#fff;transform:scaleX(0.8765);">Revisão</span>
<span class="t" style="left:474.00px;top:28.30px;font-size:9px;line-height:10px;height:10px;color:#fff;transform:scaleX(0.8887);">Exibir</span>
<span class="t" style="left:516.00px;top:28.30px;font-size:9px;line-height:10px;height:10px;color:#fff;transform:scaleX(0.9661);">Desenvolvedor</span>
<span class="t" style="left:596.00px;top:28.30px;font-size:9px;line-height:10px;height:10px;color:#fff;transform:scaleX(0.8973);">MSP</span>
<svg class="b" style="left:630px;top:27px;" width="9" height="13" viewBox="0 0 9 13"><path d="M4.5 0.6 A3.6 3.6 0 0 1 6.6 7.2 V9 H2.4 V7.2 A3.6 3.6 0 0 1 4.5 0.6 Z" fill="none" stroke="#fff" stroke-width="0.9"/><path d="M2.8 10.5 H6.2 M3.3 12 H5.7" stroke="#fff" stroke-width="0.9"/></svg>
<span class="t" style="left:641.00px;top:29.40px;font-size:9px;line-height:10px;height:10px;color:#e4efe8;transform:scaleX(0.9464);">Diga-me o que você deseja fazer</span>
<svg class="b" style="left:991px;top:27px;" width="13" height="12" viewBox="0 0 13 12"><path d="M3 4.5 H1 V11 H10.5 V8.5" fill="none" stroke="#fff" stroke-width="1"/><path d="M3.5 8.5 C4 5.5 6 4 8.5 4 V1.5 L12 5 L8.5 8.3 V6 C6.5 6 4.8 6.8 3.5 8.5 Z" fill="none" stroke="#fff" stroke-width="1" stroke-linejoin="round"/></svg>
<span class="t" style="left:1008.00px;top:29.40px;font-size:9px;line-height:10px;height:10px;color:#fff;transform:scaleX(0.9608);">Compartilhar</span>
<!-- ribbon -->
<div class="b" style="left:0px;top:44px;width:1060px;height:73px;background:#f1f1f1;"></div>
<svg class="b" style="left:17px;top:49px;" width="24" height="27" viewBox="0 0 24 27"><rect x="0.5" y="2.5" width="17" height="22" rx="1" fill="#d9d6d9"/>
<rect x="4.5" y="1.5" width="9" height="3.6" fill="#bdbabd"/><rect x="7.3" y="0" width="3.4" height="3" rx="1.2" fill="#bdbabd"/>
<path d="M13.5 12.5 H20 L23.5 16 V26 H13.5 Z" fill="#f3edf3" stroke="#e2dde2" stroke-width="0.6"/></svg>
<div class="b" style="left:11px;top:75.5px;width:30px;height:1px;background:#e3e3e3;"></div>
<span class="t" style="left:17.00px;top:77.80px;font-size:9px;line-height:10px;height:10px;color:#b2b2b2;transform:scaleX(0.9067);">Colar</span>
<svg class="b" style="left:24.5px;top:93.0px;" width="4" height="2" viewBox="0 0 4 2"><path d="M0 0 H4 L2.0 2 Z" fill="#c0c0c0"/></svg>
<svg class="b" style="left:50px;top:50.5px;" width="11" height="12" viewBox="0 0 11 12"><path d="M2.2 0.5 L8.2 9 M8.8 0.5 L2.8 9" stroke="#5a5a5a" stroke-width="1.1" fill="none"/>
<circle cx="2.6" cy="9.6" r="1.9" fill="none" stroke="#4f86c6" stroke-width="1.1"/><circle cx="8.4" cy="9.6" r="1.9" fill="none" stroke="#4f86c6" stroke-width="1.1"/></svg>
<svg class="b" style="left:49px;top:68.5px;" width="12" height="13" viewBox="0 0 12 13"><path d="M0.5 0.5 H5 L7.5 3 V9.5 H0.5 Z" fill="#dfe9f5" stroke="#b9c3cf" stroke-width="0.8"/>
<path d="M4.5 3.5 H9 L11.5 6 V12.5 H4.5 Z" fill="#cfe0f3" stroke="#aab6c4" stroke-width="0.8"/>
<path d="M6 7 H10 M6 8.8 H10 M6 10.6 H10" stroke="#8fb4de" stroke-width="0.7"/></svg>
<svg class="b" style="left:67.6px;top:74.4px;" width="4" height="2.2" viewBox="0 0 4 2.2"><path d="M0 0 H4 L2.0 2.2 Z" fill="#555"/></svg>
<svg class="b" style="left:50px;top:90.5px;" width="12" height="10" viewBox="0 0 12 10"><path d="M1 5 L6.5 2.2 L9 6.5 L4.2 9.8 Z" fill="#e9b850"/>
<path d="M6.6 2 L8.2 1.2 L10 4.6 L8.9 5.6 Z" fill="#8a8a8a"/><path d="M8.6 1.6 L11 0.3 L11.8 1.8 L9.5 3.2 Z" fill="#555"/></svg>
<span class="t" style="left:2.00px;top:107.80px;font-size:8px;line-height:9px;height:9px;color:#444;transform:scaleX(0.8957);">Área de Transferência</span>
<svg class="b" style="left:76.5px;top:110px;" width="6" height="6" viewBox="0 0 6 6"><path d="M0.5 4.5 V0.5 H4.5" fill="none" stroke="#b0b0b0" stroke-width="0.9"/><path d="M2.2 2.2 L5 5 M5 2.8 V5 H2.8" fill="none" stroke="#b0b0b0" stroke-width="0.9"/></svg>
<div class="b" style="left:86px;top:47px;width:1px;height:69px;background:#e0e0e0;"></div>
<div class="b" style="left:89px;top:54px;width:67.5px;height:17.5px;background:#fff;border:1px solid #e2e2e2;box-sizing:border-box;"></div>
<div class="b" style="left:156px;top:54px;width:34px;height:17.5px;background:#fff;border:1px solid #e2e2e2;box-sizing:border-box;"></div>
<span class="t" style="left:91.50px;top:59.00px;font-size:9px;line-height:10px;height:10px;color:#555;transform:scaleX(0.9606);">Calibri</span>
<svg class="b" style="left:151.0px;top:62.0px;" width="3.6" height="2" viewBox="0 0 3.6 2"><path d="M0 0 H3.6 L1.8 2 Z" fill="#555"/></svg>
<span class="t" style="left:159.30px;top:59.00px;font-size:9px;line-height:10px;height:10px;color:#555;transform:scaleX(0.9312);">11</span>
<svg class="b" style="left:184.0px;top:62.0px;" width="3.6" height="2" viewBox="0 0 3.6 2"><path d="M0 0 H3.6 L1.8 2 Z" fill="#555"/></svg>
<span class="t" style="left:197.50px;top:58.00px;font-size:11.5px;line-height:12px;height:12px;color:#a8a8a8;transform:scaleX(0.9778);">A</span>
<svg class="b" style="left:203px;top:56.5px;" width="4" height="2.4" viewBox="0 0 4 2.4"><path d="M0 2.4 L2 0 L4 2.4 Z" fill="#a8a8a8"/></svg>
<span class="t" style="left:221.00px;top:58.00px;font-size:11.5px;line-height:12px;height:12px;color:#a8a8a8;transform:scaleX(0.9778);">A</span>
<svg class="b" style="left:226.5px;top:56.5px;" width="4" height="2.4" viewBox="0 0 4 2.4"><path d="M0 0 H4 L2 2.4 Z" fill="#a8a8a8"/></svg>
<span class="t" style="left:96.00px;top:81.50px;font-size:13px;line-height:15px;height:15px;color:#a3a3a3;font-weight:bold;transform:scaleX(1.0439);">N</span>
<span class="t" style="left:122.50px;top:81.50px;font-size:13px;line-height:15px;height:15px;color:#a8a8a8;font-style:italic;transform:scaleX(0.9690);font-family:'Liberation Serif',serif;">I</span>
<span class="t" style="left:142.40px;top:81.50px;font-size:13px;line-height:15px;height:15px;color:#a3a3a3;font-weight:bold;transform:scaleX(0.8765);">S</span>
<div class="b" style="left:142.6px;top:94.6px;width:7px;height:1px;background:#a3a3a3;"></div>
<svg class="b" style="left:156.2px;top:87.5px;" width="3.6" height="2" viewBox="0 0 3.6 2"><path d="M0 0 H3.6 L1.8 2 Z" fill="#c4c4c4"/></svg>
<svg class="b" style="left:165.5px;top:82.5px;" width="12" height="12" viewBox="0 0 12 12"><rect x="0.5" y="0.5" width="10.5" height="10.5" fill="#f3ebf3" stroke="#e2d8e2" stroke-width="0.9"/><path d="M5.75 0.5 V11 M0.5 5.75 H11" stroke="#e2d8e2" stroke-width="0.9"/></svg>
<svg class="b" style="left:181.39999999999998px;top:87.5px;" width="3.6" height="2" viewBox="0 0 3.6 2"><path d="M0 0 H3.6 L1.8 2 Z" fill="#c4c4c4"/></svg>
<svg class="b" style="left:191.5px;top:82px;" width="12" height="12" viewBox="0 0 12 12"><path d="M4.8 2.2 L9.8 7 L5.6 10.6 L0.8 6 Z" fill="#f6f6f6" stroke="#b5b5b5" stroke-width="0.9"/><path d="M3.2 3.6 V1.6 A1.4 1.4 0 0 1 6 1.6 V3.4" fill="none" stroke="#b5b5b5" stroke-width="0.9"/><path d="M10.4 7.4 C11.6 9 11.6 10.4 10.6 11" fill="none" stroke="#b5b5b5" stroke-width="1"/></svg>
<svg class="b" style="left:206.7px;top:87.5px;" width="3.6" height="2" viewBox="0 0 3.6 2"><path d="M0 0 H3.6 L1.8 2 Z" fill="#c4c4c4"/></svg>
<span class="t" style="left:217.00px;top:80.50px;font-size:14px;line-height:16px;height:16px;color:#a3a3a3;transform:scaleX(1.0495);">A</span>
<svg class="b" style="left:231.7px;top:87.5px;" width="3.6" height="2" viewBox="0 0 3.6 2"><path d="M0 0 H3.6 L1.8 2 Z" fill="#c4c4c4"/></svg>
<span class="t" style="left:148.00px;top:107.80px;font-size:8px;line-height:9px;height:9px;color:#444;transform:scaleX(0.8946);">Fonte</span>
<svg class="b" style="left:230px;top:110px;" width="6" height="6" viewBox="0 0 6 6"><path d="M0.5 4.5 V0.5 H4.5" fill="none" stroke="#b0b0b0" stroke-width="0.9"/><path d="M2.2 2.2 L5 5 M5 2.8 V5 H2.8" fill="none" stroke="#b0b0b0" stroke-width="0.9"/></svg>
<div class="b" style="left:239.5px;top:47px;width:1px;height:69px;background:#e0e0e0;"></div>
<svg class="b" style="left:248px;top:56px;" width="14" height="14" viewBox="0 0 14 14"><rect x="0" y="0.00" width="11.7" height="1.6" fill="#dfdfdf"/><rect x="0.8" y="1.95" width="10" height="1.6" fill="#dfdfdf"/><rect x="0" y="3.90" width="11.7" height="1.6" fill="#dfdfdf"/></svg>
<svg class="b" style="left:271.5px;top:60.2px;" width="14" height="14" viewBox="0 0 14 14"><rect x="0" y="0.00" width="11.7" height="1.6" fill="#dfdfdf"/><rect x="0.8" y="1.95" width="10" height="1.6" fill="#dfdfdf"/><rect x="0" y="3.90" width="11.7" height="1.6" fill="#dfdfdf"/></svg>
<svg class="b" style="left:295px;top:64px;" width="14" height="14" viewBox="0 0 14 14"><rect x="0" y="0.00" width="11.7" height="1.6" fill="#dfdfdf"/><rect x="0.8" y="1.95" width="10" height="1.6" fill="#dfdfdf"/><rect x="0" y="3.90" width="11.7" height="1.6" fill="#dfdfdf"/></svg>
<svg class="b" style="left:317px;top:56px;" width="15" height="14" viewBox="0 0 15 14"><path d="M2.5 12.5 L12 3" stroke="#b9b9b9" stroke-width="1"/><path d="M9 2.6 H12.4 V6" fill="none" stroke="#b9b9b9" stroke-width="1"/><text x="1.5" y="6.5" font-size="6.5" fill="#b9b9b9" font-family="Liberation Sans" transform="rotate(-45 4 5)">ab</text></svg>
<svg class="b" style="left:332.5px;top:62.1px;" width="3.4" height="1.8" viewBox="0 0 3.4 1.8"><path d="M0 0 H3.4 L1.7 1.8 Z" fill="#c4c4c4"/></svg>
<svg class="b" style="left:248px;top:84px;" width="14" height="14" viewBox="0 0 14 14"><rect x="0" y="0.00" width="11" height="1.5" fill="#dfdfdf"/><rect x="0" y="1.85" width="8.5" height="1.5" fill="#dfdfdf"/><rect x="0" y="3.70" width="11" height="1.5" fill="#dfdfdf"/><rect x="0" y="5.55" width="8.5" height="1.5" fill="#dfdfdf"/><rect x="0" y="7.40" width="11" height="1.5" fill="#dfdfdf"/></svg>
<svg class="b" style="left:271.5px;top:84px;" width="14" height="14" viewBox="0 0 14 14"><rect x="0" y="0.00" width="11.5" height="1.5" fill="#dfdfdf"/><rect x="1.2" y="1.85" width="9.1" height="1.5" fill="#dfdfdf"/><rect x="0" y="3.70" width="11.5" height="1.5" fill="#dfdfdf"/><rect x="1.2" y="5.55" width="9.1" height="1.5" fill="#dfdfdf"/><rect x="0" y="7.40" width="11.5" height="1.5" fill="#dfdfdf"/></svg>
<svg class="b" style="left:295px;top:84px;" width="14" height="14" viewBox="0 0 14 14"><rect x="0.5" y="0.00" width="11" height="1.5" fill="#dfdfdf"/><rect x="3" y="1.85" width="8.5" height="1.5" fill="#dfdfdf"/><rect x="0.5" y="3.70" width="11" height="1.5" fill="#dfdfdf"/><rect x="3" y="5.55" width="8.5" height="1.5" fill="#dfdfdf"/><rect x="0.5" y="7.40" width="11" height="1.5" fill="#dfdfdf"/></svg>
<svg class="b" style="left:317.5px;top:84px;" width="13" height="10" viewBox="0 0 13 10"><rect x="4" y="0" width="9" height="9.5" fill="#dedede"/><path d="M7.5 4.75 H1 M3.6 2 L0.9 4.75 L3.6 7.5" fill="none" stroke="#b0b0b0" stroke-width="1.1"/></svg>
<svg class="b" style="left:341px;top:84px;" width="13" height="10" viewBox="0 0 13 10"><rect x="4" y="0" width="9" height="9.5" fill="#dedede"/><path d="M0 4.75 H6 M3.6 2 L6.3 4.75 L3.6 7.5" fill="none" stroke="#b0b0b0" stroke-width="1.1"/></svg>
<svg class="b" style="left:365px;top:57px;" width="11" height="12" viewBox="0 0 11 12"><text x="0" y="5.5" font-size="6.5" fill="#b3b3b3" font-family="Liberation Sans">ab</text><text x="0.3" y="11" font-size="6" fill="#b3b3b3" font-family="Liberation Sans">c</text><path d="M4.5 9 H8.8 V6.8 M6 7.6 L4.5 9 L6 10.4" fill="none" stroke="#b3b3b3" stroke-width="0.8"/></svg>
<span class="t" style="left:379.00px;top:59.00px;font-size:9px;line-height:10px;height:10px;color:#b2b2b2;transform:scaleX(0.9503);">Quebrar Texto Automaticamente</span>
<svg class="b" style="left:362.5px;top:82px;" width="13" height="13" viewBox="0 0 13 13"><rect x="0.5" y="0.5" width="12" height="11.5" fill="#f8f2f8" stroke="#e6dae6" stroke-width="0.9"/><path d="M0.5 3.3 H12.5 M0.5 9.2 H12.5 M4.5 0.5 V3.3 M8.5 0.5 V3.3 M4.5 9.2 V12 M8.5 9.2 V12" stroke="#e6dae6" stroke-width="0.9"/><path d="M2 6.25 H11 M3.6 4.8 L2 6.25 L3.6 7.7 M9.4 4.8 L11 6.25 L9.4 7.7" fill="none" stroke="#b3b3b3" stroke-width="0.8"/></svg>
<span class="t" style="left:378.00px;top:84.50px;font-size:9px;line-height:10px;height:10px;color:#b2b2b2;transform:scaleX(0.9233);">Mesclar e Centralizar</span>
<svg class="b" style="left:463.5px;top:87.6px;" width="3.4" height="1.8" viewBox="0 0 3.4 1.8"><path d="M0 0 H3.4 L1.7 1.8 Z" fill="#c4c4c4"/></svg>
<span class="t" style="left:348.80px;top:107.80px;font-size:8px;line-height:9px;height:9px;color:#444;transform:scaleX(0.9444);">Alinhamento</span>
<svg class="b" style="left:502px;top:110px;" width="6" height="6" viewBox="0 0 6 6"><path d="M0.5 4.5 V0.5 H4.5" fill="none" stroke="#b0b0b0" stroke-width="0.9"/><path d="M2.2 2.2 L5 5 M5 2.8 V5 H2.8" fill="none" stroke="#b0b0b0" stroke-width="0.9"/></svg>
<div class="b" style="left:511px;top:47px;width:1px;height:69px;background:#e0e0e0;"></div>
<div class="b" style="left:515px;top:54px;width:118px;height:17.5px;background:#fff;border:1px solid #e2e2e2;box-sizing:border-box;"></div>
<svg class="b" style="left:627.5px;top:62.1px;" width="3.4" height="1.8" viewBox="0 0 3.4 1.8"><path d="M0 0 H3.4 L1.7 1.8 Z" fill="#b8b8b8"/></svg>
<svg class="b" style="left:517px;top:83.5px;" width="12" height="11" viewBox="0 0 12 11"><rect x="0.5" y="0.5" width="11" height="6.5" rx="0.8" fill="#f4f4f4" stroke="#c9c9c9" stroke-width="0.9"/><circle cx="6" cy="3.8" r="1.7" fill="#bdbdbd"/><path d="M1.5 8.5 H10.5 M2.5 10 H9.5" stroke="#d6d6d6" stroke-width="0.9"/></svg>
<svg class="b" style="left:534.8px;top:87.6px;" width="3.4" height="1.8" viewBox="0 0 3.4 1.8"><path d="M0 0 H3.4 L1.7 1.8 Z" fill="#777"/></svg>
<span class="t" style="left:545.00px;top:81.50px;font-size:13.5px;line-height:15px;height:15px;color:#a3a3a3;transform:scaleX(1.0830);">%</span>
<span class="t" style="left:568.50px;top:84.00px;font-size:8.5px;line-height:10px;height:10px;color:#c2c2c2;transform:scaleX(0.9167);">000</span>
<span class="t" style="left:598.00px;top:81.00px;font-size:7.5px;line-height:9px;height:9px;color:#b0b0b0;transform:scaleX(1.1191);">,0</span>
<span class="t" style="left:596.00px;top:87.50px;font-size:7.5px;line-height:9px;height:9px;color:#b0b0b0;transform:scaleX(0.8632);">,00</span>
<svg class="b" style="left:591.5px;top:83.5px;" width="6" height="5" viewBox="0 0 6 5"><path d="M5.5 2.5 H0.8 M2.6 0.6 L0.7 2.5 L2.6 4.4" fill="none" stroke="#9d9d9d" stroke-width="0.9"/></svg>
<span class="t" style="left:618.50px;top:81.00px;font-size:7.5px;line-height:9px;height:9px;color:#b0b0b0;transform:scaleX(0.8632);">,00</span>
<span class="t" style="left:621.50px;top:87.50px;font-size:7.5px;line-height:9px;height:9px;color:#b0b0b0;transform:scaleX(1.1191);">,0</span>
<svg class="b" style="left:615px;top:90px;" width="6" height="5" viewBox="0 0 6 5"><path d="M0.5 2.5 H5.2 M3.4 0.6 L5.3 2.5 L3.4 4.4" fill="none" stroke="#9d9d9d" stroke-width="0.9"/></svg>
<span class="t" style="left:555.00px;top:107.80px;font-size:8px;line-height:9px;height:9px;color:#444;transform:scaleX(0.9665);">Número</span>
<svg class="b" style="left:626.5px;top:110px;" width="6" height="6" viewBox="0 0 6 6"><path d="M0.5 4.5 V0.5 H4.5" fill="none" stroke="#b0b0b0" stroke-width="0.9"/><path d="M2.2 2.2 L5 5 M5 2.8 V5 H2.8" fill="none" stroke="#b0b0b0" stroke-width="0.9"/></svg>
<div class="b" style="left:636px;top:47px;width:1px;height:69px;background:#e0e0e0;"></div>
<svg class="b" style="left:653px;top:50px;" width="27" height="26" viewBox="0 0 27 26"><rect x="0.5" y="0.5" width="23" height="19.5" fill="#f8f3f8" stroke="#ece3ec" stroke-width="0.9"/><path d="M0.5 4.4 H23.5 M0.5 8.3 H23.5 M0.5 12.2 H23.5 M0.5 16.1 H23.5 M8 0.5 V20 M16 0.5 V20" stroke="#ece3ec" stroke-width="0.9"/><path d="M8 0.5 H12.5 V5 H15.5 V9.5 H13 V14 H11.5 V20 H8 Z" fill="#b3b3b3"/><rect x="13.5" y="13.5" width="12" height="11" fill="#f8f3f8" stroke="#ece3ec" stroke-width="0.9"/><path d="M16.5 17.5 H22.5 M16.5 20.5 H22.5 M21.5 15.5 L17.5 22.5" stroke="#8f8f8f" stroke-width="0.9"/></svg>
<span class="t" style="left:643.00px;top:77.20px;font-size:9px;line-height:10px;height:10px;color:#b2b2b2;transform:scaleX(0.9267);">Formatação</span>
<span class="t" style="left:639.00px;top:88.20px;font-size:9px;line-height:10px;height:10px;color:#b2b2b2;transform:scaleX(0.9568);">Condicional</span>
<svg class="b" style="left:687.3px;top:92.6px;" width="3.4" height="1.8" viewBox="0 0 3.4 1.8"><path d="M0 0 H3.4 L1.7 1.8 Z" fill="#c0c0c0"/></svg>
<svg class="b" style="left:708px;top:50px;" width="29" height="26" viewBox="0 0 29 26"><rect x="0.5" y="0.5" width="26" height="20.5" fill="#f8f3f8" stroke="#ece3ec" stroke-width="0.9"/><rect x="7" y="4.6" width="19.5" height="16.4" fill="#d9d6d9"/><path d="M0.5 4.6 H26.5 M0.5 8.7 H26.5 M0.5 12.8 H26.5 M0.5 16.9 H26.5 M7 0.5 V21 M13.5 0.5 V21 M20 0.5 V21" stroke="#ece3ec" stroke-width="0.9"/><path d="M27.5 6.5 L28 11 L19 20 L16 17.5 Z" fill="#b5b5b5"/><path d="M16.5 17 L19.5 20 C17 24.5 12 24 9.5 24.5 C12.5 23 12.5 18.5 16.5 17 Z" fill="#b5b5b5"/><ellipse cx="17" cy="19.5" rx="2.4" ry="1.6" fill="#f6f6f6" transform="rotate(40 17 19.5)"/></svg>
<span class="t" style="left:693.00px;top:77.20px;font-size:9px;line-height:10px;height:10px;color:#b2b2b2;transform:scaleX(0.9342);">Formatar como</span>
<span class="t" style="left:707.50px;top:88.20px;font-size:9px;line-height:10px;height:10px;color:#b2b2b2;transform:scaleX(0.8861);">Tabela</span>
<svg class="b" style="left:733.8px;top:92.6px;" width="3.4" height="1.8" viewBox="0 0 3.4 1.8"><path d="M0 0 H3.4 L1.7 1.8 Z" fill="#c0c0c0"/></svg>
<svg class="b" style="left:757.5px;top:49px;" width="29" height="26" viewBox="0 0 29 26"><rect x="0.5" y="0.5" width="24" height="20.5" fill="#f8f3f8" stroke="#ece3ec" stroke-width="0.9"/><path d="M0.5 4.6 H24.5 M0.5 16.9 H24.5 M5.5 0.5 V21 M19.5 0.5 V21 M10 0.5 V4.6 M15 0.5 V4.6 M10 16.9 V21 M15 16.9 V21 M0.5 8.7 H5.5 M0.5 12.8 H5.5 M19.5 8.7 H24.5 M19.5 12.8 H24.5" stroke="#ece3ec" stroke-width="0.9"/><rect x="6" y="5.2" width="13" height="11.2" fill="#d9d6d9"/><path d="M27 6.5 L27.5 11 L18.5 20 L15.5 17.5 Z" fill="#b5b5b5"/><path d="M16 17 L19 20 C16.5 24.5 11.5 24 9 24.5 C12 23 12 18.5 16 17 Z" fill="#b5b5b5"/><ellipse cx="16.5" cy="19.5" rx="2.4" ry="1.6" fill="#f6f6f6" transform="rotate(40 16.5 19.5)"/></svg>
<span class="t" style="left:752.50px;top:77.20px;font-size:9px;line-height:10px;height:10px;color:#b2b2b2;transform:scaleX(0.8970);">Estilos de</span>
<span class="t" style="left:755.50px;top:88.20px;font-size:9px;line-height:10px;height:10px;color:#b2b2b2;transform:scaleX(0.9406);">Célula</span>
<svg class="b" style="left:782.3px;top:92.6px;" width="3.4" height="1.8" viewBox="0 0 3.4 1.8"><path d="M0 0 H3.4 L1.7 1.8 Z" fill="#c0c0c0"/></svg>
<span class="t" style="left:704.00px;top:107.80px;font-size:8px;line-height:9px;height:9px;color:#444;transform:scaleX(0.8700);">Estilos</span>
<div class="b" style="left:793px;top:47px;width:1px;height:69px;background:#e0e0e0;"></div>
<svg class="b" style="left:799.5px;top:48.5px;" width="27" height="26" viewBox="0 0 27 26"><rect x="2" y="0.5" width="14.5" height="5.2" fill="#f8f3f8" stroke="#eae0ea" stroke-width="0.9"/><path d="M9.25 0.5 V5.7" stroke="#eae0ea" stroke-width="0.9"/><rect x="2" y="14.8" width="14.5" height="10" fill="#f8f3f8" stroke="#eae0ea" stroke-width="0.9"/><path d="M9.25 14.8 V24.8" stroke="#eae0ea" stroke-width="0.9"/><path d="M2 19.80 H16.5" stroke="#eae0ea" stroke-width="0.9"/><rect x="12.8" y="7.9" width="13.4" height="5.4" fill="#d9d9d9"/><path d="M19.5 7.9 V13.3" stroke="#ececec" stroke-width="0.9"/><path d="M11.3 10.6 H1.2 M5 6.9 L1 10.6 L5 14.3" fill="none" stroke="#c2c2c2" stroke-width="1.5"/></svg>
<div class="b" style="left:798px;top:75px;width:31px;height:1px;background:#e4e4e4;"></div>
<span class="t" style="left:801.50px;top:77.20px;font-size:9px;line-height:10px;height:10px;color:#444;transform:scaleX(0.9518);">Inserir</span>
<svg class="b" style="left:811.8000000000001px;top:92.7px;" width="3.6" height="2" viewBox="0 0 3.6 2"><path d="M0 0 H3.6 L1.8 2 Z" fill="#555"/></svg>
<svg class="b" style="left:836px;top:48.5px;" width="27" height="26" viewBox="0 0 27 26"><rect x="0.5" y="0.5" width="14.5" height="5.2" fill="#f8f3f8" stroke="#eae0ea" stroke-width="0.9"/><path d="M7.75 0.5 V5.7" stroke="#eae0ea" stroke-width="0.9"/><rect x="0.5" y="14.8" width="14.5" height="10" fill="#f8f3f8" stroke="#eae0ea" stroke-width="0.9"/><path d="M7.75 14.8 V24.8" stroke="#eae0ea" stroke-width="0.9"/><path d="M0.5 19.80 H15.0" stroke="#eae0ea" stroke-width="0.9"/><rect x="5" y="7.9" width="11.6" height="5.4" fill="#d9d9d9"/><path d="M14.6 5.2 L26.6 16.2 M26.6 5.2 L14.6 16.2" stroke="#c2c2c2" stroke-width="1.4"/></svg>
<div class="b" style="left:834px;top:75px;width:31px;height:1px;background:#e4e4e4;"></div>
<span class="t" style="left:837.00px;top:77.20px;font-size:9px;line-height:10px;height:10px;color:#444;transform:scaleX(0.8887);">Excluir</span>
<svg class="b" style="left:847.4000000000001px;top:92.7px;" width="3.6" height="2" viewBox="0 0 3.6 2"><path d="M0 0 H3.6 L1.8 2 Z" fill="#555"/></svg>
<svg class="b" style="left:872px;top:47.5px;" width="24" height="26" viewBox="0 0 24 26"><path d="M2.5 3 H21.5 M2.5 0.8 V5.2 M21.5 0.8 V5.2 M4.8 1.2 L2.8 3 L4.8 4.8 M19.2 1.2 L21.2 3 L19.2 4.8" fill="none" stroke="#3b78c0" stroke-width="0.9"/>
<path d="M0.5 7 H23.5 V22.5 H14 L12.5 24.5 H9.5 L8.5 22.5 H0.5 Z" fill="#fbfbfb" stroke="#d4d4d4" stroke-width="0.9"/>
<path d="M0.5 12 H23.5 M0.5 17.5 H23.5 M6.5 7 V22.5 M17.5 7 V22.5" stroke="#e1e1e1" stroke-width="0.9"/>
<rect x="7.3" y="10" width="7.2" height="8" fill="#3b78c0"/></svg>
<span class="t" style="left:867.50px;top:77.20px;font-size:9px;line-height:10px;height:10px;color:#444;transform:scaleX(0.9314);">Formatar</span>
<svg class="b" style="left:882.8000000000001px;top:92.7px;" width="3.6" height="2" viewBox="0 0 3.6 2"><path d="M0 0 H3.6 L1.8 2 Z" fill="#555"/></svg>
<span class="t" style="left:837.80px;top:107.80px;font-size:8px;line-height:9px;height:9px;color:#444;transform:scaleX(0.8696);">Células</span>
<div class="b" style="left:905.5px;top:47px;width:1px;height:69px;background:#e0e0e0;"></div>
<svg class="b" style="left:914px;top:49.5px;" width="11" height="11" viewBox="0 0 11 11"><path d="M9.8 2.2 V0.6 H0.8 L5.6 5.4 L0.8 10.3 H9.8 V8.7" fill="none" stroke="#8c8c8c" stroke-width="1.1"/></svg>
<svg class="b" style="left:932.2px;top:54.5px;" width="3.6" height="2" viewBox="0 0 3.6 2"><path d="M0 0 H3.6 L1.8 2 Z" fill="#555"/></svg>
<svg class="b" style="left:913px;top:66.5px;" width="14" height="14" viewBox="0 0 14 14"><rect x="0.5" y="2.5" width="12.5" height="10.5" fill="#fff" stroke="#c8c8c8" stroke-width="0.9"/><rect x="0.5" y="0.5" width="12.5" height="1.6" fill="#6b6b6b"/><path d="M6.75 4.5 V10.5 M4.2 8.2 L6.75 10.8 L9.3 8.2" fill="none" stroke="#2f74c0" stroke-width="1.3"/></svg>
<svg class="b" style="left:928.7px;top:72.2px;" width="3.6" height="2" viewBox="0 0 3.6 2"><path d="M0 0 H3.6 L1.8 2 Z" fill="#555"/></svg>
<svg class="b" style="left:914.5px;top:87px;" width="11" height="10" viewBox="0 0 11 10"><path d="M1 7 L6.5 1 L10 4 L4.5 9.8 Z" fill="#ea7a8c"/><path d="M1 7 L2.5 5.4 L6 8.3 L4.5 9.8 Z" fill="#d9657a"/></svg>
<svg class="b" style="left:928.7px;top:91.3px;" width="3.6" height="2" viewBox="0 0 3.6 2"><path d="M0 0 H3.6 L1.8 2 Z" fill="#555"/></svg>
<span class="t" style="left:948.00px;top:48.20px;font-size:13.2px;line-height:15px;height:15px;color:#3b78c0;font-weight:bold;transform:scaleX(0.9756);">A</span>
<span class="t" style="left:948.60px;top:60.20px;font-size:13.2px;line-height:15px;height:15px;color:#9b4fb5;font-weight:bold;transform:scaleX(1.0418);">Z</span>
<svg class="b" style="left:960px;top:55px;" width="13" height="13.5" viewBox="0 0 13 13.5"><path d="M0 0.3 H12.3 L7.3 5.4 V12.5 H5 V5.4 Z" fill="#7a7a7a"/></svg>
<span class="t" style="left:941.50px;top:77.20px;font-size:9px;line-height:10px;height:10px;color:#444;transform:scaleX(0.8866);">Classificar</span>
<span class="t" style="left:942.80px;top:88.20px;font-size:9px;line-height:10px;height:10px;color:#444;transform:scaleX(0.9344);">e Filtrar</span>
<svg class="b" style="left:973.8px;top:92.75px;" width="3.4" height="1.9" viewBox="0 0 3.4 1.9"><path d="M0 0 H3.4 L1.7 1.9 Z" fill="#555"/></svg>
<svg class="b" style="left:990px;top:47.5px;" width="27" height="27" viewBox="0 0 27 27"><circle cx="16.7" cy="10.5" r="7.6" fill="#fff" stroke="#3b78c0" stroke-width="1.9"/><path d="M11 16.5 L3.2 23.8" stroke="#3b78c0" stroke-width="2.6" stroke-linecap="round"/></svg>
<span class="t" style="left:983.30px;top:77.20px;font-size:9px;line-height:10px;height:10px;color:#444;transform:scaleX(0.9076);">Localizar e</span>
<span class="t" style="left:980.80px;top:88.20px;font-size:9px;line-height:10px;height:10px;color:#444;transform:scaleX(0.9171);">Selecionar</span>
<svg class="b" style="left:1022.3px;top:92.75px;" width="3.4" height="1.9" viewBox="0 0 3.4 1.9"><path d="M0 0 H3.4 L1.7 1.9 Z" fill="#555"/></svg>
<span class="t" style="left:957.00px;top:107.80px;font-size:8px;line-height:9px;height:9px;color:#444;transform:scaleX(0.8994);">Edição</span>
<div class="b" style="left:1030px;top:47px;width:1px;height:69px;background:#e0e0e0;"></div>
<svg class="b" style="left:1046px;top:109.5px;" width="8" height="5" viewBox="0 0 8 5"><path d="M0.7 4.3 L4 1 L7.3 4.3" fill="none" stroke="#555" stroke-width="1.1"/></svg>
<!-- bottom -->
<div class="b" style="left:1046px;top:146px;width:14px;height:495px;background:#e6e6e6;"></div>
<div class="b" style="left:1047px;top:162px;width:13px;height:479px;background:#d6d6d6;"></div>
<div class="b" style="left:1047px;top:149px;width:12.5px;height:10px;background:#fff;border:1px solid #d8d8d8;box-sizing:border-box;"></div>
<svg class="b" style="left:1050.3px;top:152.6px;" width="5.8" height="3.2" viewBox="0 0 5.8 3.2"><path d="M0 3.2 L2.9 0.2 L5.8 3.2 Z" fill="#5a5a5a"/></svg>
<div class="b" style="left:1047px;top:160px;width:12.5px;height:205.5px;background:#fff;border:1px solid #d8d8d8;box-sizing:border-box;"></div>
<div class="b" style="left:1047px;top:630px;width:12.5px;height:10.5px;background:#fff;border:1px solid #d8d8d8;box-sizing:border-box;"></div>
<svg class="b" style="left:1050.3px;top:633.8px;" width="5.8" height="3.2" viewBox="0 0 5.8 3.2"><path d="M0 0 L2.9 3 L5.8 0 Z" fill="#5a5a5a"/></svg>
<div class="b" style="left:0px;top:641px;width:1060px;height:15px;background:#e6e6e6;"></div>
<div class="b" style="left:0px;top:640.6px;width:1060px;height:1px;background:#c9c9c9;"></div>
<svg class="b" style="left:10.5px;top:646.5px;" width="4" height="6" viewBox="0 0 4 6"><path d="M3.6 0.2 V5.8 L0.4 3 Z" fill="#217346"/></svg>
<svg class="b" style="left:25.5px;top:646.5px;" width="4" height="6" viewBox="0 0 4 6"><path d="M0.4 0.2 V5.8 L3.6 3 Z" fill="#c4c4c4"/></svg>
<div class="b" style="left:39.0px;top:651px;width:1.5px;height:1.5px;background:#217346;"></div>
<div class="b" style="left:41.6px;top:651px;width:1.5px;height:1.5px;background:#217346;"></div>
<div class="b" style="left:44.2px;top:651px;width:1.5px;height:1.5px;background:#217346;"></div>
<span class="t" style="left:55.50px;top:643.40px;font-size:9.3px;line-height:10px;height:10px;color:#444;transform:scaleX(0.9030);">Fev</span>
<span class="t" style="left:79.50px;top:643.40px;font-size:9.3px;line-height:10px;height:10px;color:#444;transform:scaleX(1.0614);">Mar</span>
<span class="t" style="left:106.50px;top:643.40px;font-size:9.3px;line-height:10px;height:10px;color:#444;transform:scaleX(1.0365);">Abr</span>
<span class="t" style="left:132.00px;top:643.40px;font-size:9.3px;line-height:10px;height:10px;color:#444;transform:scaleX(1.0343);">Mai</span>
<span class="t" style="left:157.50px;top:643.40px;font-size:9.3px;line-height:10px;height:10px;color:#444;transform:scaleX(0.9337);">Jun</span>
<span class="t" style="left:181.50px;top:643.40px;font-size:9.3px;line-height:10px;height:10px;color:#444;transform:scaleX(0.9253);">Jul</span>
<span class="t" style="left:203.00px;top:643.40px;font-size:9.3px;line-height:10px;height:10px;color:#444;transform:scaleX(1.0878);">Ago</span>
<span class="t" style="left:230.00px;top:643.40px;font-size:9.3px;line-height:10px;height:10px;color:#444;transform:scaleX(0.9313);">Set</span>
<span class="t" style="left:252.50px;top:643.40px;font-size:9.3px;line-height:10px;height:10px;color:#444;transform:scaleX(1.0340);">Out</span>
<span class="t" style="left:278.00px;top:643.40px;font-size:9.3px;line-height:10px;height:10px;color:#444;transform:scaleX(1.0581);">Nov</span>
<span class="t" style="left:305.00px;top:643.40px;font-size:9.3px;line-height:10px;height:10px;color:#444;transform:scaleX(0.9372);">Dez</span>
<span class="t" style="left:331.50px;top:643.40px;font-size:9.3px;line-height:10px;height:10px;color:#444;transform:scaleX(0.9438);">Rel_Equip</span>
<span class="t" style="left:383.20px;top:643.40px;font-size:9.3px;line-height:10px;height:10px;color:#444;transform:scaleX(0.9441);">Rel_Cli</span>
<span class="t" style="left:422.00px;top:643.40px;font-size:9.3px;line-height:10px;height:10px;color:#444;transform:scaleX(0.9669);">An_Equip</span>
<span class="t" style="left:504.00px;top:643.40px;font-size:9.3px;line-height:10px;height:10px;color:#444;transform:scaleX(1.0166);">Auxiliar</span>
<span class="t" style="left:546.30px;top:643.40px;font-size:9.3px;line-height:10px;height:10px;color:#444;transform:scaleX(1.0181);">Ini</span>
<span class="t" style="left:566.50px;top:643.40px;font-size:9.3px;line-height:10px;height:10px;color:#444;transform:scaleX(0.9977);">Duv</span>
<span class="t" style="left:593.00px;top:643.40px;font-size:9.3px;line-height:10px;height:10px;color:#444;transform:scaleX(0.9367);">Sug</span>
<span class="t" style="left:618.80px;top:643.40px;font-size:9.3px;line-height:10px;height:10px;color:#444;transform:scaleX(0.8936);">LUZ</span>
<div class="b" style="left:50.7px;top:643.5px;width:1px;height:11px;background:#cbcbcb;"></div>
<div class="b" style="left:74.5px;top:643.5px;width:1px;height:11px;background:#cbcbcb;"></div>
<div class="b" style="left:101.2px;top:643.5px;width:1px;height:11px;background:#cbcbcb;"></div>
<div class="b" style="left:126.8px;top:643.5px;width:1px;height:11px;background:#cbcbcb;"></div>
<div class="b" style="left:152.2px;top:643.5px;width:1px;height:11px;background:#cbcbcb;"></div>
<div class="b" style="left:176.5px;top:643.5px;width:1px;height:11px;background:#cbcbcb;"></div>
<div class="b" style="left:198.2px;top:643.5px;width:1px;height:11px;background:#cbcbcb;"></div>
<div class="b" style="left:225.7px;top:643.5px;width:1px;height:11px;background:#cbcbcb;"></div>
<div class="b" style="left:247.8px;top:643.5px;width:1px;height:11px;background:#cbcbcb;"></div>
<div class="b" style="left:273.8px;top:643.5px;width:1px;height:11px;background:#cbcbcb;"></div>
<div class="b" style="left:300.8px;top:643.5px;width:1px;height:11px;background:#cbcbcb;"></div>
<div class="b" style="left:326.3px;top:643.5px;width:1px;height:11px;background:#cbcbcb;"></div>
<div class="b" style="left:378.3px;top:643.5px;width:1px;height:11px;background:#cbcbcb;"></div>
<div class="b" style="left:416.8px;top:643.5px;width:1px;height:11px;background:#cbcbcb;"></div>
<div class="b" style="left:540.8px;top:643.5px;width:1px;height:11px;background:#cbcbcb;"></div>
<div class="b" style="left:561.2px;top:643.5px;width:1px;height:11px;background:#cbcbcb;"></div>
<div class="b" style="left:588px;top:643.5px;width:1px;height:11px;background:#cbcbcb;"></div>
<div class="b" style="left:613.8px;top:643.5px;width:1px;height:11px;background:#cbcbcb;"></div>
<div class="b" style="left:639.2px;top:643.5px;width:1px;height:11px;background:#cbcbcb;"></div>
<div class="b" style="left:467px;top:641px;width:30.5px;height:14px;background:#fff;"></div>
<div class="b" style="left:467px;top:654px;width:30.5px;height:1.6px;background:#217346;"></div>
<span class="t" style="left:471.80px;top:643.40px;font-size:9.3px;line-height:10px;height:10px;color:#217346;font-weight:bold;transform:scaleX(0.9674);">Dash</span>
<svg class="b" style="left:656px;top:643px;" width="13" height="13" viewBox="0 0 13 13"><circle cx="6.5" cy="6.5" r="5.4" fill="none" stroke="#6a6a6a" stroke-width="0.9"/><path d="M6.5 3.7 V9.3 M3.7 6.5 H9.3" stroke="#6a6a6a" stroke-width="1.1"/></svg>
<div class="b" style="left:852px;top:645.3px;width:1.1px;height:1.2px;background:#9a9a9a;"></div>
<div class="b" style="left:852px;top:648.3px;width:1.1px;height:1.2px;background:#9a9a9a;"></div>
<div class="b" style="left:852px;top:651.3px;width:1.1px;height:1.2px;background:#9a9a9a;"></div>
<div class="b" style="left:861px;top:643px;width:185px;height:12px;background:#d9d9d9;"></div>
<div class="b" style="left:861px;top:643px;width:11.5px;height:12px;background:#fff;border:1px solid #d8d8d8;box-sizing:border-box;"></div>
<svg class="b" style="left:865px;top:646.7px;" width="3.2" height="5" viewBox="0 0 3.2 5"><path d="M3.2 0 V5 L0.2 2.5 Z" fill="#444"/></svg>
<div class="b" style="left:872.5px;top:643px;width:51.5px;height:12px;background:#fff;border:1px solid #d8d8d8;box-sizing:border-box;"></div>
<div class="b" style="left:1034.5px;top:643px;width:11.5px;height:12px;background:#fff;border:1px solid #d8d8d8;box-sizing:border-box;"></div>
<svg class="b" style="left:1039px;top:646.7px;" width="3.2" height="5" viewBox="0 0 3.2 5"><path d="M0 0 V5 L3 2.5 Z" fill="#444"/></svg>
<div class="b" style="left:0px;top:656px;width:1060px;height:22px;background:#f1f1f1;"></div>
<span class="t" style="left:3.80px;top:662.80px;font-size:8.4px;line-height:10px;height:10px;color:#444;transform:scaleX(0.9051);">Pronto</span>
<svg class="b" style="left:39.5px;top:661px;" width="12" height="12" viewBox="0 0 12 12"><rect x="1.5" y="3.5" width="8" height="7.5" fill="#fff" stroke="#9a9a9a" stroke-width="0.8"/><path d="M3.5 3.5 V11 M5.5 3.5 V11 M7.5 3.5 V11 M1.5 6 H9.5 M1.5 8.5 H9.5" stroke="#c4c4c4" stroke-width="0.6"/><rect x="1.2" y="1.5" width="9" height="2" fill="#5a5a5a"/><circle cx="2" cy="2" r="2" fill="#5a5a5a"/></svg>
<div class="b" style="left:872px;top:656px;width:23px;height:22px;background:#c8c8c8;"></div>
<svg class="b" style="left:877.5px;top:661.5px;" width="12" height="12" viewBox="0 0 12 12"><rect x="0.5" y="0.5" width="11" height="11" fill="none" stroke="#8a8a8a" stroke-width="0.9"/><path d="M4.2 0.5 V11.5 M7.9 0.5 V11.5 M0.5 4.2 H11.5 M0.5 7.9 H11.5" stroke="#8a8a8a" stroke-width="0.9"/></svg>
<svg class="b" style="left:900px;top:662px;" width="12" height="11" viewBox="0 0 12 11"><rect x="0.5" y="0.5" width="11" height="10" fill="none" stroke="#8a8a8a" stroke-width="0.9"/><rect x="3.2" y="2.2" width="5.6" height="6.6" fill="none" stroke="#8a8a8a" stroke-width="0.9"/><path d="M4.8 3.5 V7.5 M7.2 3.5 V7.5" stroke="#b8b8b8" stroke-width="0.8"/></svg>
<svg class="b" style="left:923px;top:661.5px;" width="12" height="12" viewBox="0 0 12 12"><rect x="0.5" y="0.5" width="11" height="11" fill="none" stroke="#8a8a8a" stroke-width="0.9"/><path d="M4 0.5 V7 M7.6 0.5 V7 M0.5 7 H11.5" stroke="#8a8a8a" stroke-width="0.9" fill="none"/></svg>
<div class="b" style="left:944.8px;top:667.4px;width:4px;height:1.2px;background:#444;"></div>
<div class="b" style="left:952.5px;top:667px;width:69px;height:1px;background:#a9a9a9;"></div>
<div class="b" style="left:985.8px;top:663.2px;width:3.2px;height:8.6px;background:#555;"></div>
<div class="b" style="left:1025.2px;top:667.3px;width:5px;height:1.2px;background:#444;"></div>
<div class="b" style="left:1027.1px;top:665.4px;width:1.2px;height:5px;background:#444;"></div>
<span class="t" style="left:1037.80px;top:663.60px;font-size:8.2px;line-height:9px;height:9px;color:#444;transform:scaleX(0.8201);">100%</span>
</div></body></html>
